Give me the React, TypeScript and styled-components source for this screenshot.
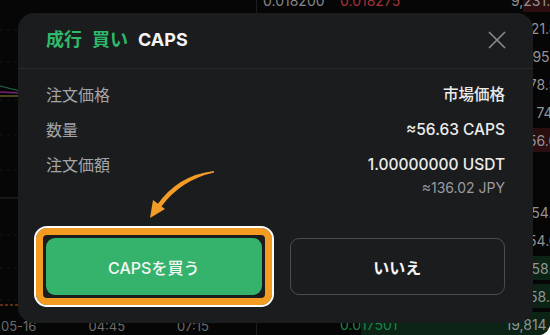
import React from "react";
import styled, { createGlobalStyle } from "styled-components";

const Global = createGlobalStyle`
  html, body { margin: 0; padding: 0; background: #ffffff; }
  body { font-family: Inter, "Noto Sans CJK JP", sans-serif; }
  * { box-sizing: border-box; }
`;

const Page = styled.div`
  position: relative;
  width: 550px;
  height: 335px;
  overflow: hidden;
  background: #060606;
  border-radius: 0 0 12px 0;
  display: grid;
  grid-template-columns: 257px 1fr;
`;

const ChartCol = styled.div`
  display: flex;
  flex-direction: column;
  border-right: 1px solid #1d1d1f;
`;

const ChartArea = styled.div`
  flex: 1;
  display: flex;
`;

const Axis = styled.div`
  height: 20px;
  display: flex;
  gap: 52px;
  padding: 2px 0 0 1px;
  align-items: center;
  font-size: 13px;
  color: #6b6c6f;
`;

const Book = styled.div`
  display: flex;
  flex-direction: column;
  margin-top: -14px;
  overflow: hidden;
`;

const Row = styled.div<{ $side: "sell" | "buy" }>`
  position: relative;
  height: 28px;
  width: 318px;
  flex: none;
  display: grid;
  grid-template-columns: 6px 77px 90px 1fr;
  align-items: center;
  font-size: 14px;
  color: ${(p) => (p.$side === "sell" ? "#a9333a" : "#1a844a")};
`;

const Depth = styled.span<{ $side: "sell" | "buy" }>`
  position: absolute;
  right: 0;
  top: 2px;
  bottom: 2px;
  background: ${(p) => (p.$side === "sell" ? "#2a0e10" : "#0b2416")};
`;

const Last = styled.span`
  position: relative;
  grid-column: 2;
  color: #85868a;
`;

const Price = styled.span`
  position: relative;
  grid-column: 3;
`;

const Total = styled.span`
  position: relative;
  grid-column: 4;
  text-align: right;
  color: #929396;
`;

const Mid = styled.div`
  height: 44px;
  flex: none;
`;

const Modal = styled.div`
  position: absolute;
  left: 18px;
  top: 13px;
  width: 515px;
  height: 310px;
  background: #1b1c1e;
  border-radius: 16px;
  display: flex;
  flex-direction: column;
`;

const Header = styled.div`
  height: 56px;
  padding: 0 27px 0 28px;
  display: flex;
  align-items: center;
  justify-content: space-between;
  border-bottom: 1px solid #2a2b2e;
`;

const Title = styled.div`
  display: flex;
  gap: 10px;
  font-size: 18px;
  font-weight: 700;
  line-height: 24px;
  margin-top: -2px;
`;

const TitleWord = styled.span<{ $green?: boolean }>`
  color: ${(p) => (p.$green ? "#2fb96b" : "#f4f4f4")};
`;

const CloseBtn = styled.button`
  width: 18px;
  height: 18px;
  padding: 0;
  border: none;
  background: none;
  display: flex;
  margin-top: -1px;
`;

const Body = styled.div`
  padding: 14px 28px 0 28px;
  display: flex;
  flex-direction: column;
  gap: 11px;
`;

const InfoRow = styled.div`
  display: flex;
  justify-content: space-between;
  align-items: flex-start;
  line-height: 24px;
`;

const Label = styled.span`
  color: #a3a4a7;
  font-size: 16px;
`;

const ValueCol = styled.div`
  display: flex;
  flex-direction: column;
  align-items: flex-end;
`;

const Value = styled.span`
  color: #ececec;
  font-size: 15.5px;
  font-weight: 500;
`;

const Sub = styled.span`
  color: #9a9b9e;
  font-size: 14px;
  line-height: 18px;
  margin-top: 2px;
`;

const Actions = styled.div`
  margin-top: auto;
  padding: 0 28px 28px 28px;
  display: grid;
  grid-template-columns: 1fr 1fr;
  gap: 28px;
`;

const ButtonWrap = styled.div`
  position: relative;
  display: flex;
`;

const Btn = styled.button<{ $primary?: boolean }>`
  flex: 1;
  height: 57px;
  border-radius: 9px;
  font-family: Inter, "Noto Sans CJK JP", sans-serif;
  font-size: 16px;
  font-weight: ${(p) => (p.$primary ? 500 : 700)};
  color: #f6f6f6;
  background: ${(p) => (p.$primary ? "#35b26b" : "transparent")};
  border: ${(p) => (p.$primary ? "none" : "1px solid #4b4c50")};
`;

const Highlight = styled.span`
  position: absolute;
  inset: -10px;
  border: 7px solid #f49b22;
  border-radius: 11px;
  outline: 2px solid #ffffff;
  pointer-events: none;
`;

const Arrow = styled.svg`
  position: absolute;
  left: 0;
  top: 0;
  pointer-events: none;
`;

type BookRow = { total: string; depth: number; price?: string; last?: string };

const sells: BookRow[] = [
  { total: "9,231.572", depth: 52, price: "0.018275", last: "0.018200" },
  { total: "21.806", depth: 0 },
  { total: "95.162", depth: 0 },
  { total: "78.504", depth: 0 },
  { total: "74.118", depth: 0 },
  { total: "56.640", depth: 42 },
];
const buys: BookRow[] = [
  { total: "54.812", depth: 0 },
  { total: "54.033", depth: 0 },
  { total: "58.521", depth: 42 },
  { total: "58.207", depth: 42 },
  { total: "19,814.572", depth: 214, price: "0.017501" },
];

export default function App() {
  return (
    <>
      <Global />
      <Page>
        <ChartCol>
          <ChartArea>
            <svg width="256" height="315" viewBox="0 0 256 315">
              {[30, 62, 100, 135, 170, 235, 268, 300].map((y) => (
                <line key={y} x1="0" y1={y} x2="256" y2={y} stroke="#141416" strokeDasharray="3 4" />
              ))}
              <line x1="0" y1="198" x2="256" y2="198" stroke="#2a2a2c" />
              <path d="M0 86 L12 89 L20 91" stroke="#1f6e4a" fill="none" strokeWidth="1.2" />
              <path d="M0 92 L20 93" stroke="#7a1f7a" fill="none" strokeWidth="1.5" />
              <path d="M0 96 L20 96" stroke="#8a8a2a" fill="none" strokeWidth="1" />
              <path d="M0 305 L20 305" stroke="#b0561e" fill="none" strokeDasharray="3 2" />
            </svg>
          </ChartArea>
          <Axis>
            <span>05-16</span>
            <span>04:45</span>
            <span>07:15</span>
          </Axis>
        </ChartCol>
        <Book>
          {sells.map((r, i) => (
            <Row key={"s" + i} $side="sell">
              <Depth $side="sell" style={{ width: r.depth }} />
              <Last>{r.last ?? ""}</Last>
              <Price>{r.price ?? ""}</Price>
              <Total>{r.total}</Total>
            </Row>
          ))}
          <Mid />
          {buys.map((r, i) => (
            <Row key={"b" + i} $side="buy">
              <Depth $side="buy" style={{ width: r.depth }} />
              <Last>{r.last ?? ""}</Last>
              <Price>{r.price ?? ""}</Price>
              <Total>{r.total}</Total>
            </Row>
          ))}
        </Book>

        <Modal>
          <Header>
            <Title>
              <TitleWord $green>成行</TitleWord>
              <TitleWord $green>買い</TitleWord>
              <TitleWord>CAPS</TitleWord>
            </Title>
            <CloseBtn aria-label="close">
              <svg width="18" height="18" viewBox="0 0 18 18">
                <path d="M1 1 L17 17 M17 1 L1 17" stroke="#8b8c90" strokeWidth="1.6" fill="none" />
              </svg>
            </CloseBtn>
          </Header>
          <Body>
            <InfoRow>
              <Label>注文価格</Label>
              <Value>市場価格</Value>
            </InfoRow>
            <InfoRow>
              <Label>数量</Label>
              <Value>≈56.63 CAPS</Value>
            </InfoRow>
            <InfoRow>
              <Label>注文価額</Label>
              <ValueCol>
                <Value>1.00000000 USDT</Value>
                <Sub>≈136.02 JPY</Sub>
              </ValueCol>
            </InfoRow>
          </Body>
          <Actions>
            <ButtonWrap>
              <Btn $primary>CAPSを買う</Btn>
              <Highlight />
            </ButtonWrap>
            <ButtonWrap>
              <Btn>いいえ</Btn>
            </ButtonWrap>
          </Actions>
        </Modal>

        <Arrow width="550" height="335" viewBox="0 0 550 335">
          <path d="M214 171 Q178 175 157 205 L161 207 Q181 180 214 172.6 Z" fill="#f39c27" />
          <path d="M150 218 L165 209 L153 200 Z" fill="#f39c27" />
        </Arrow>
      </Page>
    </>
  );
}
